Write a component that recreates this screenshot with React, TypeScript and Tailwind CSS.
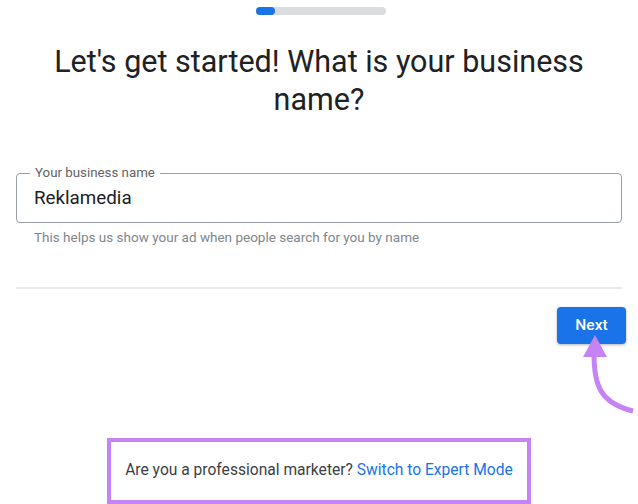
export default function App() {
  return (
    <div className="relative w-[638px] h-[504px] overflow-hidden bg-white font-['Roboto',sans-serif] text-[#202124]">
      {/* progress */}
      <div className="ml-[256px] mt-[7px] h-2 w-[130px] rounded-full bg-[#dadce0]">
        <div className="h-2 w-[19px] rounded-full bg-[#1a73e8]" />
      </div>

      <h1 className="mx-auto mt-[28px] w-[580px] text-center text-[30.5px] leading-[38px] font-normal text-[#202124]">
        Let's get started! What is your business name?
      </h1>

      <div className="px-4">
        <div className="relative mt-[54px] h-[50px] rounded-[4px] border border-[#9aa0a6]">
          <span className="absolute -top-[8px] left-[13px] bg-white px-[5px] text-[13.3px] leading-[14px] text-[#5f6368]">
            Your business name
          </span>
          <div className="flex h-full items-center pl-[17px] text-[18.8px] text-[#202124]">Reklamedia</div>
        </div>
        <p className="mt-[6px] pl-[18px] text-[13.5px] leading-4 text-[#80868b]">
          This helps us show your ad when people search for you by name
        </p>
        <div className="mt-[42px] h-[2px] bg-[#e8e8e8]" />
      </div>

      <div className="mt-[18px] flex justify-end pr-3">
        <button className="h-[37px] w-[69px] rounded-[4px] bg-[#1a73e8] text-[15.5px] font-medium text-white shadow-[0_1px_3px_rgba(0,0,0,0.3)]">
          Next
        </button>
      </div>

      <div className="mx-auto mt-[94px] flex h-[66px] w-[424px] items-center justify-center border-4 border-[#c583f5] text-[15.6px] text-[#3c4043]">
        <span>
          Are you a professional marketer? <span className="text-[#1a73e8]">Switch to Expert Mode</span>
        </span>
      </div>

      <svg className="absolute left-0 top-0" width="638" height="504" viewBox="0 0 638 504" fill="none">
        <path d="M594 354 C 594 385, 600 403, 633 411" stroke="#c583f5" strokeWidth="5" strokeLinecap="butt" />
        <path d="M595 335 L 607 357 L 583 357 Z" fill="#c583f5" />
      </svg>
    </div>
  );
}
